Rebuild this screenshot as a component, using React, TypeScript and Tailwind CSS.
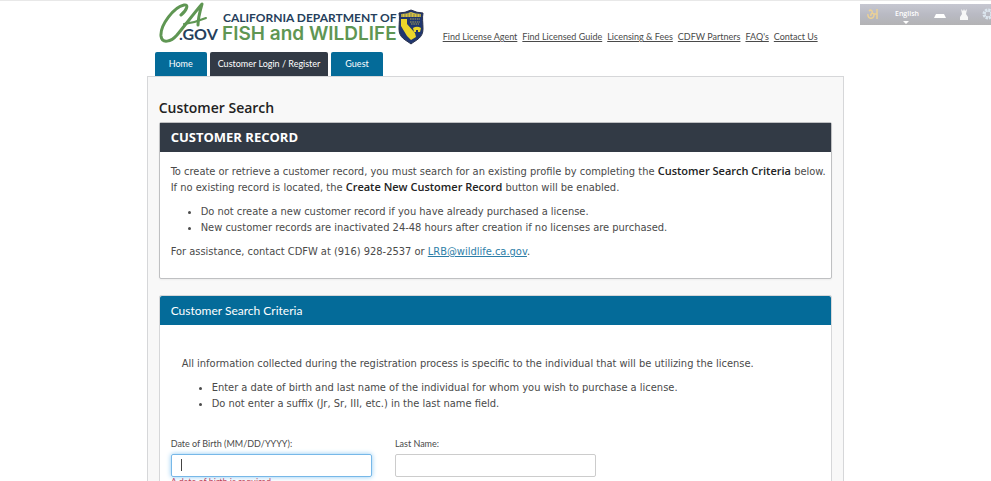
import { useState } from 'react';

const links = [
  'Find License Agent',
  'Find Licensed Guide',
  'Licensing & Fees',
  'CDFW Partners',
  "FAQ's",
  'Contact Us',
];

function Logo() {
  return (
    <svg width="266" height="44" viewBox="0 0 266 44" role="img" aria-label="California Department of Fish and Wildlife">
      {/* script CA */}
      <g fill="none" stroke="#5f9653" strokeLinecap="round" strokeLinejoin="round">
        <path d="M22 14 C28 9 30 3 25 4 C15 6 1 24 2 35 C3 43 12 41 18 34 C27 23 36 11 43 3 C41 10 39 17 39 24" strokeWidth="3" />
        <path d="M25 23 C32 22 40 20 47 17" strokeWidth="2" />
      </g>
      <g fontFamily="Lato, 'Open Sans', sans-serif" fontWeight="700">
        <text x="20" y="39" fontSize="16" fill="#263f5c">.GOV</text>
        <text x="64" y="21" fontSize="12" fill="#263f5c">CALIFORNIA DEPARTMENT OF</text>
        <text x="63" y="39" fontSize="19" fontWeight="600" fontFamily="Inter, sans-serif" fill="#5f9653">FISH and WILDLIFE</text>
      </g>
      {/* badge */}
      <path d="M240 12 Q246 12 252 9 Q258 12 264 12 C263 17 264 22 264 28 C264 37 257 39 252 43 C247 39 240 37 240 28 C240 22 241 17 240 12 Z" fill="#20366f" stroke="#28304a" />
      <path d="M242 13 Q248 13 252 11 Q256 13 262 13 V16 H242 Z" fill="#d8c341" />
      <path d="M243 13 V16 M246 13 V16 M249 12 V16 M252 12 V16 M255 13 V16 M258 13 V16 M261 13 V16" stroke="#20366f" strokeWidth="0.5" />
      <path d="M242 18 H248 V23 L256 32 L257 36 L252 39 L248 35 L245 30 L242 25 Z" fill="#ecd62a" />
      <path d="M251 18 H261 M251 21 H261 M252 23 H260" stroke="#a9a253" strokeWidth="1" strokeDasharray="1.6 0.7" />
      <path d="M254 27 Q257 25 260 26 L262 27 L261 31 H259 V29 H257 V31 H255 Z" fill="#ecd62a" />
    </svg>
  );
}

function ToolBar() {
  return (
    <div className="absolute top-[3px] right-0 h-[21px] w-[131px] bg-linear-to-b from-[#c6c7d1] via-[#b9bac3] to-[#b3b3b5]">
      <svg width="131" height="21" viewBox="0 0 131 21" role="img" aria-label="English">
        <path d="M9 7 C11 5 13 7 12 9 M8 10 C7 15 14 16 14 11 C14 8 10 9 11 12 M14 10 H17 M17 5 V15" fill="none" stroke="#ecd195" strokeWidth="1.5" />
        <text x="35" y="12" fontSize="7" fontWeight="600" fill="#fff" fontFamily="Open Sans, sans-serif">English</text>
        <path d="M43 17 H49 L46 20 Z M74 14 L76 10 H84 L86 14 Z" fill="#fff" />
        <path d="M100 16 V13 L102 10 L101 5 L103 7 L104 5 L105 7 L107 5 L106 10 L108 13 V16 Z" fill="#f7f7f7" />
        <circle cx="128" cy="10" r="4" fill="none" stroke="#dce6ef" strokeWidth="3" strokeDasharray="2.2 0.9" />
        <circle cx="128" cy="10" r="3" fill="none" stroke="#dce6ef" strokeWidth="1" />
      </svg>
    </div>
  );
}

export default function App() {
  const [birthDate, setBirthDate] = useState('');
  const [lastName, setLastName] = useState('');

  return (
    <div className="relative h-screen overflow-hidden border-t border-[#e8e8e8] bg-white font-['DejaVu_Sans_Condensed','Open_Sans',sans-serif] text-[11px] leading-4 text-[#4a4a4a]">
      <ToolBar />

      <div className="mx-auto w-[70.4%]">
        <header className="flex items-end pl-3">
          <Logo />
          <nav className="flex gap-[5px] pb-[2px] pl-[18px] font-['Lato',sans-serif] text-[9px] leading-3">
            {links.map((link) => (
              <a key={link} href="#" className="whitespace-nowrap underline">{link}</a>
            ))}
          </nav>
        </header>

        <nav className="flex gap-[3px] pt-[7px] pl-2 font-['Lato',sans-serif] text-[9px] leading-6 text-white">
          <a href="#" className="rounded-t-xs bg-[#046b99] px-[14px]">Home</a>
          <a href="#" className="rounded-t-xs bg-[#323a45] px-2">Customer Login / Register</a>
          <a href="#" className="rounded-t-xs bg-[#046b99] px-[14px]">Guest</a>
        </nav>

        <main className="border border-[#d6d7d9] bg-[#f8f8f8] px-[11px] pt-[18px]">
          <h1 className="mb-px font-['Open_Sans',sans-serif] text-[14px] leading-[26px] font-semibold text-[#222]">Customer Search</h1>

          <section className="rounded-xs border border-[#bfc0c2] bg-white shadow-xs">
            <h2 className="bg-[#323a45] px-[11px] font-['Open_Sans',sans-serif] text-[13px] leading-[29px] font-bold text-white">CUSTOMER RECORD</h2>
            <div className="pt-3 pr-1 pb-[18px] pl-[11px]">
              <p>
                To create or retrieve a customer record, you must search for an existing profile by completing the{' '}
                <strong className="font-['Open_Sans',sans-serif] leading-none font-semibold text-[#222]">Customer Search Criteria</strong> below. If no existing record is located, the{' '}
                <strong className="font-['Open_Sans',sans-serif] leading-none font-semibold text-[#222]">Create New Customer Record</strong> button will be enabled.
              </p>
              <ul className="list-disc py-2 pl-[30px]">
                <li>Do not create a new customer record if you have already purchased a license.</li>
                <li>New customer records are inactivated 24-48 hours after creation if no licenses are purchased.</li>
              </ul>
              <p>
                For assistance, contact CDFW at (916) 928-2537 or{' '}
                <a href="mailto:LRB@wildlife.ca.gov" className="text-[#2d7ea8] underline">LRB@wildlife.ca.gov</a>.
              </p>
            </div>
          </section>

          <section className="mt-4 rounded-t-xs border border-[#d6d7d9] bg-white">
            <h2 className="rounded-t-xs bg-[#046b99] px-[11px] font-['Lato',sans-serif] text-[12px] leading-[29px] text-white">Customer Search Criteria</h2>
            <div className="px-[22px] pt-[31px]">
              <p>All information collected during the registration process is specific to the individual that will be utilizing the license.</p>
              <ul className="list-disc py-2 pl-[30px]">
                <li>Enter a date of birth and last name of the individual for whom you wish to purchase a license.</li>
                <li>Do not enter a suffix (Jr, Sr, III, etc.) in the last name field.</li>
              </ul>
            </div>
            <form className="grid grid-cols-3 gap-[23px] px-[11px] pt-4 pb-8 font-['Lato',sans-serif] text-[9px]">
              <div>
                <label htmlFor="birth" className="mb-[2px] block">Date of Birth (MM/DD/YYYY):</label>
                <div className="relative">
                  <input
                    id="birth"
                    autoFocus
                    value={birthDate}
                    onChange={(e) => setBirthDate(e.target.value)}
                    className="block h-[23px] w-full rounded-xs border border-[#77b8e8] px-[10px] text-[11px] caret-transparent shadow-[0_0_5px_#8cc8f2] outline-none"
                  />
                  {birthDate === '' && <span className="pointer-events-none absolute top-[5px] left-[10px] h-3 w-px bg-[#444]" />}
                </div>
                <p className="leading-[10px] text-[#c33149]">A date of birth is required.</p>
              </div>
              <div>
                <label htmlFor="last" className="mb-[2px] block">Last Name:</label>
                <input
                  id="last"
                  value={lastName}
                  onChange={(e) => setLastName(e.target.value)}
                  className="block h-[23px] w-full rounded-xs border border-[#ccc] px-[10px] text-[11px] outline-none"
                />
              </div>
            </form>
          </section>
        </main>
      </div>
    </div>
  );
}
